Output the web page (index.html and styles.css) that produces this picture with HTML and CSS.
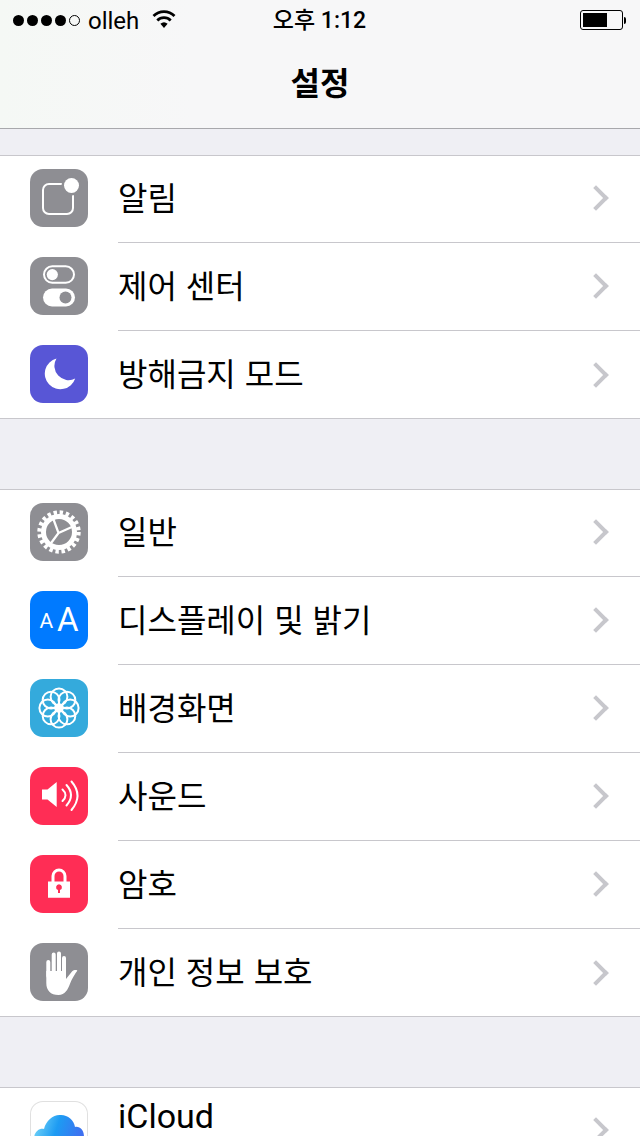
FILE: index.html
```html
<!DOCTYPE html>
<html lang="ko">
<head>
    <meta charset="UTF-8">
    <meta name="viewport" content="width=device-width, initial-scale=1.0">
    <title>설정</title>
    <link rel="stylesheet" href="styles.css">
</head>
<body>

    <header class="nav">
        <div class="status">
            <div class="status-left">
                <span class="signal">
                    <i class="dot"></i><i class="dot"></i><i class="dot"></i><i class="dot"></i><i class="dot empty"></i>
                </span>
                <span class="carrier">olleh</span>
                <svg class="wifi" viewBox="0 0 24 18">
                    <path d="M12 18L8.400 13.800A5.500 5.500 0 0 1 15.600 13.800z" fill="#000"/>
                    <path d="M5.300 10.400A9.500 9.500 0 0 1 18.700 10.400M1.500 6A15 15 0 0 1 22.500 6" fill="none" stroke="#000" stroke-width="2.800"/>
                </svg>
            </div>
            <div class="time">오후 1:12</div>
            <div class="status-right">
                <div class="battery"><div class="battery-fill"></div></div>
                <div class="battery-tip"></div>
            </div>
        </div>
        <h1 class="title">설정</h1>
    </header>

    <section class="group">
        <div class="row">
            <div class="icon gray">
                <svg viewBox="0 0 58 58">
                    <rect x="13" y="15" width="30" height="30" rx="6" fill="none" stroke="#fff" stroke-width="2"/>
                    <circle cx="41.500" cy="16.500" r="10" fill="#8e8e93"/>
                    <circle cx="41.500" cy="16.500" r="7.500" fill="#fff"/>
                </svg>
            </div>
            <div class="row-body"><span class="label">알림</span><span class="chevron"></span></div>
        </div>
        <div class="row">
            <div class="icon gray">
                <svg viewBox="0 0 58 58">
                    <rect x="14" y="9.300" width="30" height="16.500" rx="8.250" fill="none" stroke="#fff" stroke-width="2"/>
                    <circle cx="22.300" cy="17.600" r="5.600" fill="#fff"/>
                    <rect x="13" y="31.500" width="32" height="18" rx="9" fill="#fff"/>
                    <circle cx="35.500" cy="40.500" r="6" fill="#8e8e93"/>
                </svg>
            </div>
            <div class="row-body"><span class="label">제어 센터</span><span class="chevron"></span></div>
        </div>
        <div class="row last">
            <div class="icon purple">
                <svg viewBox="0 0 58 58">
                    <path d="M26.500 13.500A15.600 15.600 0 1 0 45.200 33.500 14.200 14.200 0 0 1 26.500 13.500z" fill="#fff"/>
                </svg>
            </div>
            <div class="row-body"><span class="label">방해금지 모드</span><span class="chevron"></span></div>
        </div>
    </section>

    <section class="group">
        <div class="row">
            <div class="icon gray">
                <svg viewBox="0 0 58 58">
                    <circle cx="29" cy="29" r="19.500" fill="none" stroke="#fff" stroke-width="4.400" stroke-dasharray="3.400 2.730"/>
                    <circle cx="29" cy="29" r="15.500" fill="none" stroke="#fff" stroke-width="5"/>
                    <path d="M28.500 30L23 15M28.500 30L43 23.500M28.500 30L20 41.500" fill="none" stroke="#fff" stroke-width="2.200"/>
                </svg>
            </div>
            <div class="row-body"><span class="label">일반</span><span class="chevron"></span></div>
        </div>
        <div class="row">
            <div class="icon blue">
                <svg viewBox="0 0 58 58">
                    <text class="aa" x="9.500" y="36.500" font-size="21">A</text>
                    <text class="aa" x="27" y="40" font-size="33">A</text>
                </svg>
            </div>
            <div class="row-body"><span class="label">디스플레이 및 밝기</span><span class="chevron"></span></div>
        </div>
        <div class="row">
            <div class="icon cyan">
                <svg viewBox="0 0 58 58">
                    <g fill="none" stroke="#fff" stroke-width="2">
                        <circle cx="29" cy="17.800" r="8.400"/>
                        <circle cx="29" cy="17.800" r="8.400" transform="rotate(45 29 29)"/>
                        <circle cx="29" cy="17.800" r="8.400" transform="rotate(90 29 29)"/>
                        <circle cx="29" cy="17.800" r="8.400" transform="rotate(135 29 29)"/>
                        <circle cx="29" cy="17.800" r="8.400" transform="rotate(180 29 29)"/>
                        <circle cx="29" cy="17.800" r="8.400" transform="rotate(225 29 29)"/>
                        <circle cx="29" cy="17.800" r="8.400" transform="rotate(270 29 29)"/>
                        <circle cx="29" cy="17.800" r="8.400" transform="rotate(315 29 29)"/>
                    </g>
                    <circle cx="29" cy="29" r="3" fill="#fff"/>
                </svg>
            </div>
            <div class="row-body"><span class="label">배경화면</span><span class="chevron"></span></div>
        </div>
        <div class="row">
            <div class="icon pink">
                <svg viewBox="0 0 58 58">
                    <path d="M12 22.500h5.500L26.700 15v25l-9.200-7.500H12z" fill="#fff"/>
                    <path d="M32.500 22.500q6 5.500 0 11.500M36.500 18q9 10 0 20.500M41.500 14.500q12 14 0 28.500" fill="none" stroke="#fff" stroke-width="2" stroke-linecap="round"/>
                </svg>
            </div>
            <div class="row-body"><span class="label">사운드</span><span class="chevron"></span></div>
        </div>
        <div class="row">
            <div class="icon pink">
                <svg viewBox="0 0 58 58">
                    <path d="M23 27v-6a6 6 0 0 1 12 0v6" fill="none" stroke="#fff" stroke-width="3"/>
                    <path fill-rule="evenodd" d="M18 26.500h22v16.200H18zM29 29.300a3 3 0 0 0-1 5.800V38h2v-2.900a3 3 0 0 0-1-5.800z" fill="#fff"/>
                </svg>
            </div>
            <div class="row-body"><span class="label">암호</span><span class="chevron"></span></div>
        </div>
        <div class="row last">
            <div class="icon gray">
                <svg viewBox="0 0 58 58">
                    <path d="M18.300 19v14M23.700 11.500v17M29 10.500v18M34 15v15" fill="none" stroke="#fff" stroke-width="4" stroke-linecap="round"/>
                    <path d="M16.300 28h19.700v8l6-7.500c2-2.200 5.600-1.700 5.300-.7-2.600 3.400-5.300 8-7.300 13-2.200 6-5 11.200-11.500 11.200-8 0-12.200-4.500-12.200-12z" fill="#fff"/>
                </svg>
            </div>
            <div class="row-body"><span class="label">개인 정보 보호</span><span class="chevron"></span></div>
        </div>
    </section>

    <section class="group">
        <div class="row">
            <div class="icon white">
                <svg viewBox="0 0 58 58">
                    <defs>
                        <linearGradient id="cloud" x1="0" y1="0" x2="1" y2="0.300">
                            <stop offset="0" stop-color="#7fdcf8"/>
                            <stop offset="0.500" stop-color="#1d9bf3"/>
                            <stop offset="1" stop-color="#3f6ff0"/>
                        </linearGradient>
                    </defs>
                    <path d="M4 58V38c0-7 5-11 10-10 2-9 10-15 17-14 7 0 13 5 14 12 5-1 9 3 9 10v22z" fill="url(#cloud)"/>
                </svg>
            </div>
            <div class="row-body"><span class="label account">iCloud</span><span class="chevron"></span></div>
        </div>
    </section>

</body>
</html>
```

FILE: styles.css
```css
* { margin: 0; padding: 0; box-sizing: border-box; }

html, body {
    height: 1136px;
    overflow: hidden;
}

body {
    background: #efeff4;
    color: #000;
    font-family: "Noto Sans CJK KR", sans-serif;
}

.nav {
    height: 129px;
    background: linear-gradient(90deg, #f5f8f5, #f7f7f8 30%);
    border-bottom: 1px solid #a8a8ac;
    margin-bottom: 26px;
}

.status {
    height: 40px;
    padding: 0 14px 0 13px;
    display: grid;
    grid-template-columns: 1fr auto 1fr;
    align-items: center;
}

.status-left {
    display: flex;
    align-items: center;
}

.signal {
    display: flex;
    gap: 3px;
}

.dot {
    width: 11px;
    height: 11px;
    border-radius: 50%;
    background: #000;
}

.dot.empty {
    background: none;
    border: 1px solid #000;
}

.carrier {
    font-family: Roboto, sans-serif;
    font-size: 24px;
    line-height: 28px;
    margin-left: 8px;
    padding-top: 2px;
}

.wifi {
    width: 24px;
    height: 18px;
    margin-left: 13px;
    margin-bottom: 2px;
}

.time {
    font-family: Roboto, "Noto Sans CJK KR", sans-serif;
    font-weight: 500;
    font-size: 23px;
    line-height: 28px;
    padding-top: 2px;
}

.status-right {
    display: flex;
    align-items: center;
    justify-content: flex-end;
}

.battery {
    width: 43px;
    height: 20px;
    border: 1px solid #000;
    border-radius: 3px;
    padding: 2px;
}

.battery-fill {
    width: 24px;
    height: 100%;
    background: #000;
}

.battery-tip {
    width: 2px;
    height: 7px;
    margin-left: 1px;
    background: #000;
    border-radius: 0 2px 2px 0;
}

.title {
    font-size: 32px;
    font-weight: 700;
    line-height: 44px;
    margin-top: 19px;
    text-align: center;
}

.group {
    background: #fff;
    box-shadow: inset 0 1px #c8c7cc, inset 0 -1px #c8c7cc;
    margin-bottom: 70px;
}

.row {
    height: 88px;
    padding-left: 30px;
    display: flex;
}

.icon {
    width: 58px;
    height: 58px;
    margin-top: 14px;
    border-radius: 13px;
    overflow: hidden;
    flex-shrink: 0;
}

.icon svg {
    display: block;
    width: 58px;
    height: 58px;
}

.gray { background: #8e8e93; }
.purple { background: #5856d6; }
.blue { background: #007aff; }
.cyan { background: #34aadc; }
.pink { background: #ff2d55; }

.white {
    background: #fff;
    box-shadow: inset 0 0 0 1px #e0e0e0;
}

.aa {
    font-family: Roboto, sans-serif;
    fill: #fff;
}

.row-body {
    flex: 1;
    margin-left: 30px;
    padding-right: 32px;
    display: flex;
    align-items: center;
    justify-content: space-between;
    border-bottom: 1px solid #c8c7cc;
}

.row.last .row-body {
    border-bottom: none;
}

.label {
    font-size: 32px;
    line-height: 44px;
    margin-bottom: 6px;
}

.label.account {
    font-family: Roboto, sans-serif;
    font-size: 34px;
    margin-bottom: 30px;
}

.chevron {
    width: 18px;
    height: 18px;
    margin-right: 3px;
    margin-bottom: 1px;
    border-top: 4px solid #c7c7cc;
    border-right: 4px solid #c7c7cc;
    transform: rotate(45deg);
}
```
